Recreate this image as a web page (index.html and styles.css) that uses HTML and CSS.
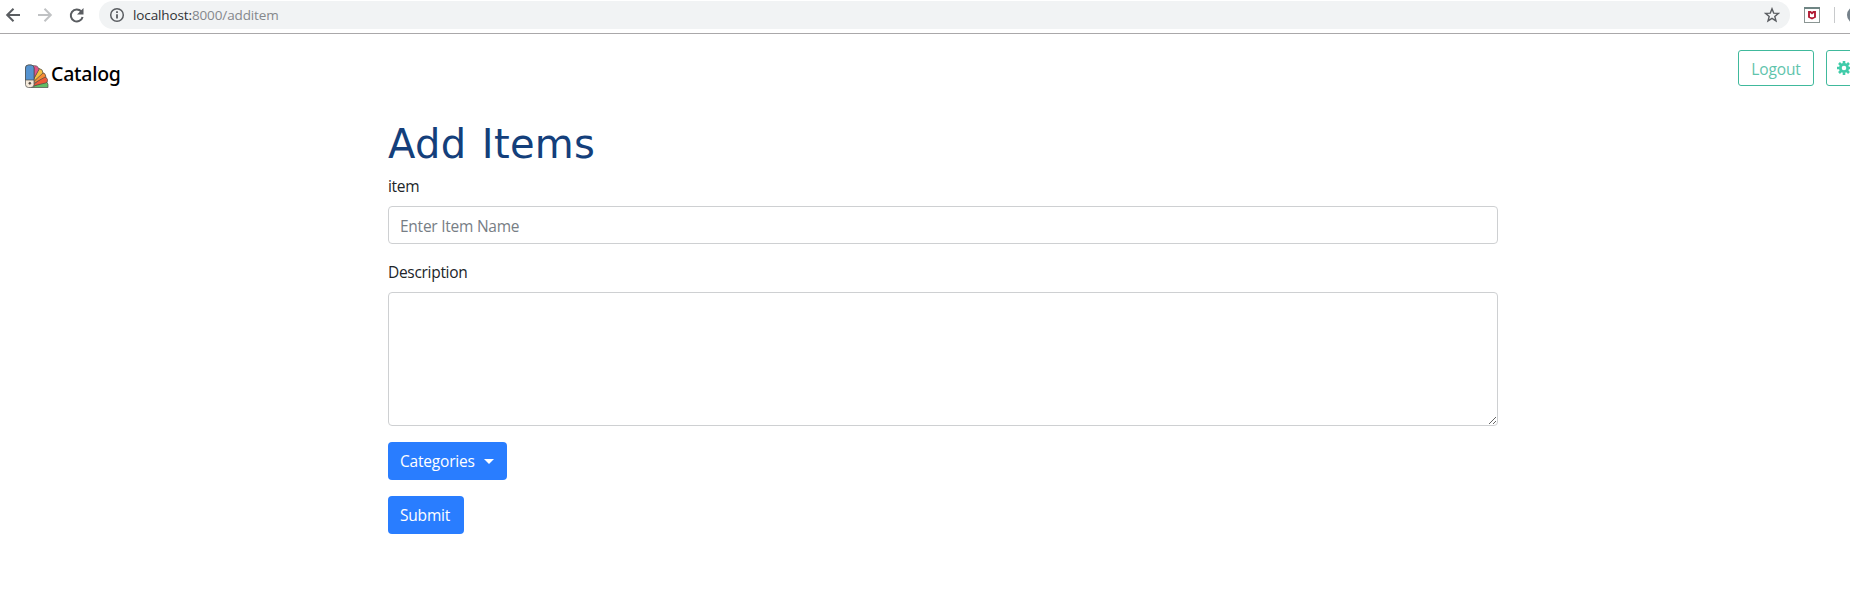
FILE: index.html
```
<!DOCTYPE html>
<html lang="en">
<head>
<meta charset="utf-8">
<title>Catalog</title>
<link rel="stylesheet" href="styles.css">
</head>
<body>
<header class="browser">
  <svg class="nav-icons" width="99" height="33" viewBox="0 0 99 33" fill="none" stroke="#5a5d61" stroke-width="2">
    <path d="M20 15H7.500M13.500 8.700 7.200 15l6.300 6.300"/>
    <path stroke="#c0c2c4" d="M38 15h12.500M44.500 8.700 50.800 15l-6.300 6.300"/>
    <path d="M81.300 11.500A6 6 0 1 0 82.600 17"/>
    <path fill="#5a5d61" stroke="none" d="M83.500 8v6.500H77z"/>
  </svg>
  <div class="address">
    <svg width="16" height="16" viewBox="0 0 16 16" fill="none" stroke="#5a5d61" stroke-width="1.500"><circle cx="8" cy="8" r="6.300"/><path stroke-width="1.800" d="M8 7.200v4.300M8 4.200v1.700"/></svg>
    <span class="url">localhost:<span class="path">8000/additem</span></span>
    <svg class="star" width="16" height="16" viewBox="0 0 16 16" fill="none" stroke="#5a5d61" stroke-width="1.400"><path d="m8 1.800 1.700 4.300 4.700.3-3.600 3 1.200 4.500L8 11.400l-4 2.500 1.200-4.500-3.600-3 4.700-.3z"/></svg>
  </div>
  <svg class="extensions" width="60" height="33" viewBox="0 0 60 33">
    <rect x="14.500" y="7.500" width="15" height="15" fill="#fff" stroke="#8b9694"/>
    <path d="M14 7h16v2H14z" fill="#6f8584"/>
    <path d="M20.500 12H19v5l3 1.500 3-1.500v-5h-1.500L22 13.300z" fill="#fff" stroke="#b11c35" stroke-width="1.900"/>
    <path d="M44.500 7v16" stroke="#c8cacc"/>
    <circle cx="65.500" cy="15" r="8.500" fill="#75818a"/>
  </svg>
</header>
<nav class="navbar">
  <a class="brand">
    <svg class="logo" width="25" height="25" viewBox="0 0 25 25" stroke="#4b4a48" stroke-width=".7">
      <path fill="#62bd65" d="M7 23.500 20 17.500q4 0 4 3v3H7z"/>
      <path fill="#ef5939" d="M7 22.500 19.500 12.500q3 0 4 3 .5 3-2 3.500z"/>
      <path fill="#f58b35" d="M7 21 17.500 8.500q4 0 4.500 4z"/>
      <path fill="#f4c143" d="M7 20 15 4.500q4 .5 4 4.500z"/>
      <path fill="#df5486" d="M8 18V2q6-1.500 7 3.500z"/>
      <rect x="1.500" y="1" width="8.500" height="22.500" rx="3" fill="#f5eadb"/>
      <path fill="#5593d0" d="M1.500 16V4q0-3 3-3H7q3 0 3 3v12z"/>
      <circle cx="5.800" cy="19.300" r="1" fill="#5b4639"/>
    </svg>
    <span class="brand-name">Catalog</span>
  </a>
  <div class="actions">
    <button class="outline logout">Logout</button>
    <button class="outline settings" aria-label="Settings">
      <svg width="14" height="14" viewBox="0 0 14 14" fill="none" stroke="#40cba9"><circle cx="7" cy="7" r="3.700" stroke-width="2.800"/><path stroke-width="2.600" d="M7 0v2.500M7 11.500V14M0 7h2.500M11.500 7H14M2 2l2 2M10 10l2 2M2 12l2-2M10 4l2-2"/></svg>
    </button>
  </div>
</nav>
<main class="container">
  <h1>Add Items</h1>
  <form>
    <label class="item-label" for="item">item</label>
    <input id="item" class="control" placeholder="Enter Item Name">
    <label class="description-label" for="description">Description</label>
    <textarea id="description" class="control description"></textarea>
    <button type="button" class="button categories">Categories<span class="caret"></span></button>
    <button type="button" class="button submit">Submit</button>
  </form>
</main>
</body>
</html>
```
FILE: styles.css
```
* { box-sizing: border-box; }
body { margin: 0; height: 591px; overflow: hidden; background: #fff; color: #212529; font: 16px/24px "Open Sans", "Noto Sans", sans-serif; }
button, input, textarea { font: inherit; }
.browser { display: flex; height: 34px; border-bottom: 1px solid #aaa8aa; }
.nav-icons, .extensions { flex: none; }
.address { display: flex; align-items: center; width: 1691px; height: 28px; margin-top: 1px; padding: 0 10px; border-radius: 14px; background: #f1f3f4; }
.url { margin-left: 8px; color: #303236; font-size: 13.500px; letter-spacing: -.12px; }
.path { color: #85888c; }
.star { margin-left: auto; }
.navbar { display: flex; justify-content: space-between; height: 84px; padding: 16px 0 0 24px; }
.brand { display: flex; height: 52px; padding-top: 12px; color: #000; }
.logo { margin-top: 2px; }
.brand-name { margin-left: 2px; font: 500 19.500px/24px "Noto Sans", sans-serif; letter-spacing: -.25px; }
.actions { display: flex; gap: 12px; width: 112px; }
.outline { flex: none; height: 36px; padding: 0; border: 1px solid #40b99c; border-radius: 3px; background: #fff; color: #5fc4ac; font-size: 15.500px; line-height: 36px; }
.logout { width: 76px; letter-spacing: -.1px; }
.settings { width: 40px; padding-left: 10px; text-align: left; }
.settings svg { display: block; }
.container { width: 1110px; margin-left: 388px; }
h1 { margin: 0 0 6px; padding-top: 2px; color: #143f7b; font: 400 40px/48px "DejaVu Sans", sans-serif; letter-spacing: .3px; word-spacing: 2.500px; }
h1 + form { margin-top: -2px; padding-top: 2px; }
form { display: flex; flex-direction: column; align-items: flex-start; }
label { height: 24px; margin-bottom: 8px; font-size: 15.500px; letter-spacing: -.3px; }
.control { display: block; width: 100%; height: 38px; padding: 7px 12px 5px 11px; border: 1px solid #ced0d2; border-radius: 4px; background: #fff; font-size: 15.500px; letter-spacing: -.25px; }
.control::placeholder { color: #777e85; opacity: 1; }
#item { margin-bottom: 16px; }
.description { height: 134px; margin-bottom: 16px; resize: vertical; }
.button { display: flex; align-items: center; height: 38px; margin-bottom: 16px; padding: 0 12px; border: 0; border-radius: 4px; background: #297dff; color: #fff; font-size: 15.500px; letter-spacing: -.2px; }
.categories { width: 119px; }
.submit { width: 76px; }
.caret { margin-left: 9px; border: 5px solid transparent; border-top-color: #fff; border-bottom: 0; }
```
